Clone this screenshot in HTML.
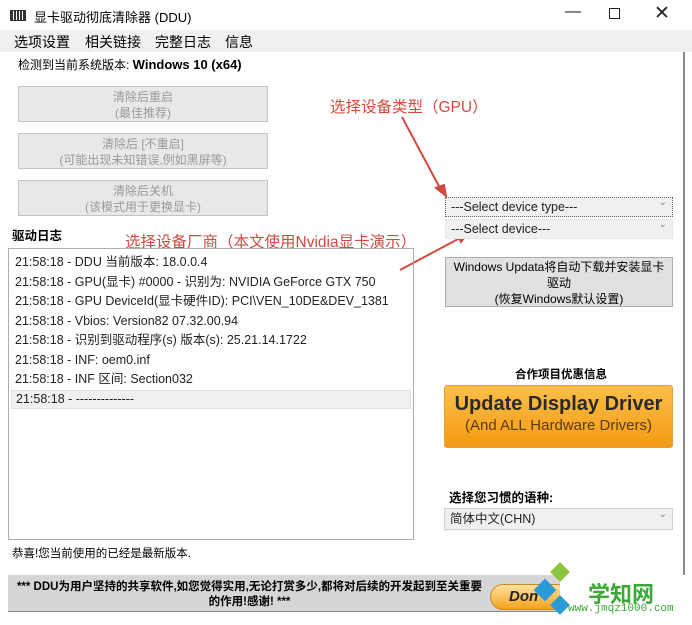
<!DOCTYPE html>
<html><head><meta charset="utf-8"><style>
*{margin:0;padding:0;box-sizing:border-box}
body{width:692px;height:625px;position:relative;overflow:hidden;background:#fff;font-family:"Liberation Sans","Noto Sans CJK SC",sans-serif;color:#000}
.a{position:absolute;white-space:nowrap}
.btn{position:absolute;left:18px;width:250px;height:36px;background:#e8e8e8;border:1px solid #c4c4c4;color:#9a9a9a;font-size:12px;text-align:center;line-height:16px;padding-top:2px}
.sel{position:absolute;left:445px;width:228px;height:20px;border:1px solid #d0d0d0;background:#f0f0f0;font-size:12.5px;padding-left:5px;line-height:18px;color:#222}
.sel:after{content:"⌄";position:absolute;right:5px;top:-4px;font-size:10px;color:#888}
.log div{height:19.5px;line-height:19.5px;padding-left:6px;font-size:12.5px;color:#222}
.red{color:#d24a3f;font-size:15.5px}
.m{position:absolute;top:32px;font-size:14px}
</style></head><body>
<div class="a" style="left:0;top:0;width:692px;height:30px;background:#fff"></div>
<div class="a" style="left:10px;top:10px;width:16px;height:11px;border:1px solid #333;background:repeating-linear-gradient(90deg,#333 0 2px,#fff 2px 3px)"></div>
<div class="a" style="left:34px;top:7px;font-size:13px">显卡驱动彻底清除器 (DDU)</div>
<div class="a" style="left:565px;top:3px;font-size:16px;color:#222">—</div>
<div class="a" style="left:609px;top:8px;width:11px;height:11px;border:1px solid #222"></div>
<div class="a" style="left:654px;top:2px;font-size:19px;color:#222">✕</div>
<div class="a" style="left:0;top:30px;width:692px;height:22px;background:#f0f0f0"></div>
<div class="m" style="left:14px">选项设置</div>
<div class="m" style="left:85px">相关链接</div>
<div class="m" style="left:155px">完整日志</div>
<div class="m" style="left:225px">信息</div>
<div class="a" style="left:683px;top:52px;width:2px;height:525px;background:#888"></div>
<div class="a" style="left:18px;top:56px;font-size:12px">检测到当前系统版本: <b style="font-size:13px">Windows 10 (x64)</b></div>
<div class="btn" style="top:86px">清除后重启<br>(最佳推荐)</div>
<div class="btn" style="top:133px">清除后 [不重启]<br>(可能出现未知错误,例如黑屏等)</div>
<div class="btn" style="top:180px">清除后关机<br>(该模式用于更换显卡)</div>
<div class="a red" style="left:330px;top:95px">选择设备类型（GPU）</div>
<div class="a" style="left:12px;top:225px;font-size:12.5px;font-weight:bold">驱动日志</div>
<div class="a red" style="left:125px;top:230px">选择设备厂商（本文使用Nvidia显卡演示）</div>
<svg class="a" style="left:0;top:0" width="692" height="625"><g stroke="#d24a3f" stroke-width="2" fill="#d24a3f">
<line x1="402" y1="117" x2="441" y2="190"/><polygon points="446,196 436,188 444,185"/>
<line x1="400" y1="270" x2="460" y2="238"/><polygon points="467,234 457,234 461,242"/></g></svg>
<div class="a log" style="left:8px;top:248px;width:406px;height:292px;border:1px solid #adadad;padding-top:4px">
<div>21:58:18 - DDU 当前版本: 18.0.0.4</div>
<div>21:58:18 - GPU(显卡) #0000 - 识别为: NVIDIA GeForce GTX 750</div>
<div>21:58:18 - GPU DeviceId(显卡硬件ID): PCI\VEN_10DE&amp;DEV_1381</div>
<div>21:58:18 - Vbios: Version82 07.32.00.94</div>
<div>21:58:18 - 识别到驱动程序(s) 版本(s): 25.21.14.1722</div>
<div>21:58:18 - INF: oem0.inf</div>
<div>21:58:18 - INF 区间: Section032</div>
<div style="background:#f0f0f0;margin:0 2px;border:1px solid #e2e2e2;line-height:17px;height:19px;padding-left:4px">21:58:18 - --------------</div>
</div>
<div class="sel" style="top:197px;border:1px dotted #666;background:#f0f0f0">---Select device type---</div>
<div class="sel" style="top:219px;background:#f0f0f0;border-color:#e6e6e6">---Select device---</div>
<div class="a" style="left:445px;top:257px;width:228px;height:50px;background:#e1e1e1;border:1px solid #adadad;font-size:12px;text-align:center;line-height:16px;padding:1px 6px 0;white-space:normal">Windows Updata将自动下载并安装显卡驱动<br>(恢复Windows默认设置)</div>
<div class="a" style="left:515px;top:366px;font-size:11.5px;font-weight:bold">合作项目优惠信息</div>
<div class="a" style="left:444px;top:385px;width:229px;height:63px;border-radius:3px;background:linear-gradient(#fbbf4a,#f49a12);border:1px solid #e2a040;text-align:center">
<div style="font-size:20px;font-weight:bold;color:#2a2a2a;margin-top:7px">Update Display Driver</div>
<div style="font-size:15px;color:#5a3a10;margin-top:1px">(And ALL Hardware Drivers)</div></div>
<div class="a" style="left:449px;top:487px;font-size:12.5px;font-weight:bold">选择您习惯的语种:</div>
<div class="sel" style="left:444px;top:508px;width:229px;height:22px;line-height:20px">简体中文(CHN)</div>
<div class="a" style="left:12px;top:545px;font-size:11.5px">恭喜!您当前使用的已经是最新版本.</div>
<div class="a" style="left:8px;top:575px;width:676px;height:37px;background:#d6d6d6;border-bottom:1px solid #888"></div>
<div class="a" style="left:12px;top:580px;width:475px;font-size:11.5px;font-weight:bold;text-align:center;line-height:15px;white-space:normal">*** DDU为用户坚持的共享软件,如您觉得实用,无论打赏多少,都将对后续的开发起到至关重要的作用!感谢! ***</div>
<div class="a" style="left:490px;top:584px;width:80px;height:26px;border-radius:13px;background:linear-gradient(#fde3a0,#f3a21c);border:1px solid #c98a20;font-size:15px;font-weight:bold;font-style:italic;color:#223;padding-left:18px;line-height:24px">Don</div>
<div class="a" style="left:560px;top:575px;width:125px;height:42px;background:#fff"></div>
<div class="a" style="left:537px;top:582px;width:16px;height:16px;background:#2b9bd8;transform:rotate(45deg)"></div>
<div class="a" style="left:553px;top:565px;width:14px;height:14px;background:#8cc63e;transform:rotate(45deg)"></div>
<div class="a" style="left:553px;top:598px;width:14px;height:14px;background:#2b9bd8;transform:rotate(45deg)"></div>
<div class="a" style="left:588px;top:577px;font-size:22px;font-weight:bold;color:#3aa935">学知网</div>
<div class="a" style="left:568px;top:603px;font-size:11px;font-family:'Liberation Mono',monospace;color:#3aa935">www.jmqz1000.com</div>
</body></html>
